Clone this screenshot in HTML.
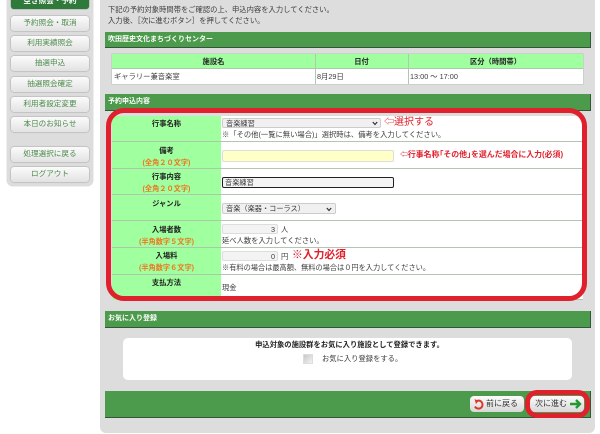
<!DOCTYPE html>
<html lang="ja"><head><meta charset="utf-8">
<style>
html,body{margin:0;padding:0;background:#fff;width:600px;height:434px;overflow:hidden}
body{font-family:"Liberation Sans","Noto Sans CJK JP",sans-serif;font-size:7.3px;color:#3c3c3c;position:relative}
#w{position:absolute;left:0;top:0;width:600px;height:434px;overflow:hidden;filter:blur(.3px)}
.a{position:absolute;white-space:nowrap}
.nav{position:absolute;left:11px;width:78px;height:15px;box-sizing:border-box;border-radius:3px;background:linear-gradient(#fbfbfb,#e2e2e2);box-shadow:0 0 1.5px #777;color:#4a8a4a;text-align:center;font-size:7.6px;line-height:14px}
.bar{position:absolute;left:105px;width:486px;background:#4c9a4c;border-bottom:1px solid #33553a;border-right:1px solid #33553a;box-sizing:border-box;color:#fff;font-weight:bold;font-size:7px}
.g{position:absolute;left:112px;width:109px;background:#a0ff9f;text-align:center;font-weight:bold;color:#222;box-sizing:border-box;border-bottom:1px solid #a9c9a9}
.w{position:absolute;left:221px;width:362px;background:#fff;box-sizing:border-box;border-bottom:1px solid #b5c5b5}
.o{color:#ee7722;display:block;font-size:7.2px;margin-top:3px;line-height:9px}
.l{display:block;line-height:9px}
.red{color:#e0202c;font-weight:bold}
.in{position:absolute;box-sizing:border-box;background:#f4f4f4;border:1px solid #ccc;border-radius:2px;color:#3c3c3c;line-height:9px}
</style></head><body><div id="w">
<div class="a" style="left:7px;top:-10px;width:86px;height:196px;background:#ddd;border-radius:6px;box-shadow:0 0 1px #999"></div>
<div class="a" style="left:11px;top:-6px;width:78px;height:15px;background:#2f7a3a;border-radius:3px;color:#fff;text-align:center;font-size:7.6px;font-weight:bold;line-height:14px;box-shadow:0 0 1px #333">空き照会・予約</div>
<div class="nav" style="top:16px">予約照会・取消</div>
<div class="nav" style="top:36px">利用実績照会</div>
<div class="nav" style="top:56px">抽選申込</div>
<div class="nav" style="top:77px">抽選照会確定</div>
<div class="nav" style="top:97px">利用者設定変更</div>
<div class="nav" style="top:117px">本日のお知らせ</div>
<div class="nav" style="top:147px">処理選択に戻る</div>
<div class="nav" style="top:167px">ログアウト</div>

<div class="a" style="left:100px;top:-10px;width:495px;height:443px;background:#ddd;border-radius:6px"></div>
<div class="a" style="left:108px;top:4px;line-height:11px">下記の予約対象時間帯をご確認の上、申込内容を入力してください。<br>入力後、［次に進むボタン］を押してください。</div>

<div class="bar" style="top:32px;height:16px;line-height:15px;padding-left:3px">吹田歴史文化まちづくりセンター</div>
<div class="a" style="left:112px;top:54px;width:471px;height:30px;background:#fff;box-shadow:0 0 0 .5px #b5c5b5"></div>
<div class="a" style="left:112px;top:54px;width:471px;height:15px;background:#a0ff9f;border-bottom:1px solid #a9c9a9;box-sizing:border-box"></div>
<div class="a" style="left:315px;top:54px;width:1px;height:30px;background:#b5c5b5"></div>
<div class="a" style="left:408px;top:54px;width:1px;height:30px;background:#b5c5b5"></div>
<div class="a" style="left:112px;top:54px;width:203px;text-align:center;font-weight:bold;color:#222;line-height:15px">施設名</div>
<div class="a" style="left:315px;top:54px;width:93px;text-align:center;font-weight:bold;color:#222;line-height:15px">日付</div>
<div class="a" style="left:408px;top:54px;width:175px;text-align:center;font-weight:bold;color:#222;line-height:15px">区分（時間帯）</div>
<div class="a" style="left:114px;top:71px;line-height:11px">ギャラリー兼音楽室</div>
<div class="a" style="left:317px;top:71px;line-height:11px">8月29日</div>
<div class="a" style="left:410px;top:71px;line-height:11px">13:00 ～ 17:00</div>

<div class="bar" style="top:94px;height:17px;line-height:15px;padding-left:3px">予約申込内容</div>

<div class="g" style="top:116px;height:26px;padding-top:3px"><span class="l">行事名称</span></div>
<div class="g" style="top:142px;height:27px;padding-top:4px"><span class="l">備考</span><span class="o">(全角２０文字)</span></div>
<div class="g" style="top:169px;height:26px;padding-top:3px"><span class="l">行事内容</span><span class="o">(全角２０文字)</span></div>
<div class="g" style="top:195px;height:26px;padding-top:4px"><span class="l">ジャンル</span></div>
<div class="g" style="top:221px;height:27px;padding-top:4px"><span class="l">入場者数</span><span class="o">(半角数字５文字)</span></div>
<div class="g" style="top:248px;height:27px;padding-top:3px"><span class="l">入場料</span><span class="o">(半角数字６文字)</span></div>
<div class="g" style="top:275px;height:25px;padding-top:3px;border:0"><span class="l">支払方法</span></div>
<div class="w" style="top:116px;height:26px"></div>
<div class="w" style="top:142px;height:27px"></div>
<div class="w" style="top:169px;height:26px"></div>
<div class="w" style="top:195px;height:26px"></div>
<div class="w" style="top:221px;height:27px"></div>
<div class="w" style="top:248px;height:27px"></div>
<div class="w" style="top:275px;height:25px"></div>

<div class="in" style="left:222px;top:118px;width:159px;height:10px;padding-left:3px;background:#f0f0f0;font-size:7.2px">音楽練習<svg style="position:absolute;right:2px;top:2px" width="6" height="5"><path d="M.8 1 3 3.5 5.2 1" fill="none" stroke="#333" stroke-width="1.2"/></svg></div>
<div class="a" style="left:222px;top:130px;line-height:9px;font-size:7.3px">※「その他(一覧に無い場合)」選択時は、備考を入力してください。</div>
<div class="a" style="left:384px;top:116px;line-height:13px;font-size:10px;color:#e0202c">⇦選択する</div>

<div class="in" style="left:222px;top:150px;width:172px;height:12px;background:#ffffc8;border-color:#ddd"></div>
<div class="a red" style="left:400px;top:150px;line-height:10px;font-size:7.9px">⇦行事名称｢その他｣を選んだ場合に入力(必須)</div>

<div class="in" style="left:222px;top:177px;width:172px;height:11px;background:#f4f4f4;border:1px solid #222;border-radius:2px;padding-left:2px;font-size:7.2px">音楽練習</div>

<div class="in" style="left:222px;top:203px;width:114px;height:11px;padding-left:3px;background:#f0f0f0;font-size:7.2px">音楽（楽器・コーラス）<svg style="position:absolute;right:3px;top:3px" width="6" height="5"><path d="M.8 1 3 3.5 5.2 1" fill="none" stroke="#333" stroke-width="1.2"/></svg></div>

<div class="in" style="left:222px;top:224px;width:56px;height:10px;text-align:right;padding-right:2px;background:#f3f3f3;border-color:#ddd">3</div>
<div class="a" style="left:281px;top:225px;line-height:9px">人</div>
<div class="a" style="left:222px;top:236px;line-height:9px">延べ人数を入力してください。</div>

<div class="in" style="left:222px;top:251px;width:56px;height:10px;text-align:right;padding-right:2px;background:#f3f3f3;border-color:#ddd">0</div>
<div class="a" style="left:281px;top:252px;line-height:9px">円</div>
<div class="a" style="left:292px;top:249px;line-height:13px;font-size:10.8px;font-weight:bold;color:#e0202c">※入力必須</div>
<div class="a" style="left:222px;top:263px;line-height:9px;font-size:7.2px">※有料の場合は最高額、無料の場合は０円を入力してください。</div>
<div class="a" style="left:222px;top:283px;line-height:9px">現金</div>

<div class="a" style="left:106px;top:108px;width:481px;height:193px;box-sizing:border-box;border:5px solid #e0202c;border-radius:18px"></div>

<div class="bar" style="top:311px;height:17px;line-height:15px;padding-left:3px">お気に入り登録</div>
<div class="a" style="left:123px;top:338px;width:449px;height:42px;background:#fff;border-radius:5px"></div>
<div class="a" style="left:125px;top:340px;width:449px;text-align:center;font-weight:bold;color:#222;line-height:9px">申込対象の施設群をお気に入り施設として登録できます。</div>
<div class="a" style="left:303px;top:354px;width:10px;height:10px;box-sizing:border-box;background:linear-gradient(135deg,#c8c8c8,#f2f2f2);border:1px solid #ddd"></div>
<div class="a" style="left:322px;top:354px;line-height:9px">お気に入り登録をする。</div>

<div class="bar" style="top:391px;height:27px"></div>
<div class="a" style="left:470px;top:396px;width:54px;height:16px;border-radius:4px;background:linear-gradient(#fbfbfb,#d8d8d8);color:#333;font-size:8px;line-height:16px;padding-left:16px;box-sizing:border-box">前に戻る</div>
<svg class="a" style="left:472px;top:398px" width="13" height="13" viewBox="0 0 13 13"><path d="M4 3.5A4 4 0 1 1 3 8.5" fill="none" stroke="#d93a2b" stroke-width="2"/><path d="M2.5 1 6.5 3 4 6z" fill="#d93a2b"/></svg>
<div class="a" style="left:530px;top:396px;width:54px;height:16px;border-radius:4px;background:linear-gradient(#fbfbfb,#d8d8d8);color:#333;font-size:8px;line-height:16px;padding-left:5px;box-sizing:border-box">次に進む</div>
<svg class="a" style="left:569px;top:398px" width="13" height="12" viewBox="0 0 13 12"><path d="M1 6H11M7 2 11 6 7 10" fill="none" stroke="#1f9a32" stroke-width="2.4"/></svg>
<div class="a" style="left:525px;top:390px;width:65px;height:28px;box-sizing:border-box;border:5px solid #e0202c;border-radius:12px"></div>
</div></body></html>
